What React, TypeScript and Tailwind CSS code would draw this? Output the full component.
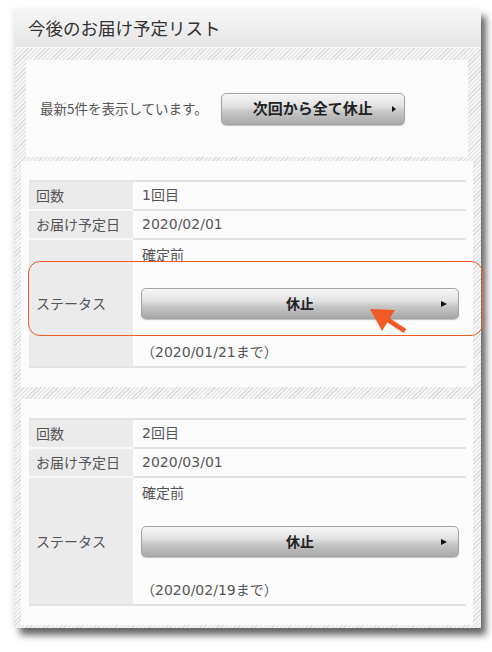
import React from 'react';

const hatch =
  'bg-[#f3f3f3] bg-[image:repeating-linear-gradient(135deg,#dcdcdc_0px,#dcdcdc_1px,#f5f5f5_1px,#f5f5f5_3px)]';

const btn =
  'relative flex items-center justify-center rounded-[5px] border border-[#a3a3a3] bg-[image:linear-gradient(to_bottom,#f6f6f6_0%,#e2e2e2_40%,#c6c6c6_60%,#a9a9a9_100%)] shadow-[0_1px_1px_rgba(0,0,0,0.25)] font-bold text-[#222]';

const valueFont = "font-['DejaVu_Sans','Noto_Sans_CJK_JP',sans-serif]";

function Triangle({ className }: { className: string }) {
  return (
    <span
      className={`absolute top-1/2 -translate-y-1/2 h-0 w-0 border-y-transparent border-l-[#111] ${className}`}
    />
  );
}

type Delivery = {
  count: string;
  date: string;
  deadline: string;
};

const deliveries: Delivery[] = [
  { count: '1回目', date: '2020/02/01', deadline: '（2020/01/21まで）' },
  { count: '2回目', date: '2020/03/01', deadline: '（2020/02/19まで）' },
];

function DeliveryCard({ item, className }: { item: Delivery; className: string }) {
  return (
    <div className={`bg-[#fcfcfc] ml-[6px] mr-[8px] pl-[8px] pr-[7px] py-[19px] ${className}`}>
      <div className="border-t-2 border-b-2 border-[#e3e3e3] text-[14px] text-[#555]">
        {/* 回数 */}
        <div className="flex">
          <div className="w-[104px] shrink-0 bg-[#ebebeb] border-b-2 border-[#f8f8f8] pl-[7px] h-[29px] flex items-center">
            回数
          </div>
          <div className={`flex-1 border-b-2 border-[#e3e3e3] pl-[9px] h-[29px] flex items-center ${valueFont}`}>
            {item.count}
          </div>
        </div>
        {/* お届け予定日 */}
        <div className="flex">
          <div className="w-[104px] shrink-0 bg-[#ebebeb] border-b-2 border-[#f8f8f8] pl-[7px] h-[29px] flex items-center">
            お届け予定日
          </div>
          <div className={`flex-1 border-b-2 border-[#e3e3e3] pl-[9px] h-[29px] flex items-center ${valueFont}`}>
            {item.date}
          </div>
        </div>
        {/* ステータス */}
        <div className="flex">
          <div className="w-[104px] shrink-0 bg-[#ebebeb] pl-[7px] flex items-center">
            ステータス
          </div>
          <div className="flex-1 pl-[8px] pr-[7px] pt-[4px] pb-[4px]">
            <div className="h-[20px] leading-[20px] pl-[1px]">確定前</div>
            <button className={`${btn} mt-[24px] w-full h-[31px] text-[14px]`}>
              休止
              <Triangle className="right-[11px] border-y-[3.5px] border-l-[6px]" />
            </button>
            <div className={`mt-[23px] h-[20px] leading-[20px] ${valueFont}`}>{item.deadline}</div>
          </div>
        </div>
      </div>
    </div>
  );
}

export default function App() {
  return (
    <div className="relative w-[492px] h-[652px] bg-white overflow-hidden font-['Noto_Sans_CJK_JP',sans-serif]">
      <div className="ml-[15px] mt-[9px] w-[466px] shadow-[5px_7px_7px_rgba(0,0,0,0.6),-3px_0_6px_rgba(0,0,0,0.06)]">
        {/* Header */}
        <div className="h-[39px] flex items-center pl-[13px] bg-[image:linear-gradient(to_bottom,#f7f7f7,#e5e5e5)] border-b border-[#fafafa] text-[17.5px] text-[#333]">
          今後のお届け予定リスト
        </div>

        <div className={`${hatch} pt-[12px] pb-[3px]`}>
          {/* Summary */}
          <div className="ml-[11px] mr-[13px] h-[97px] bg-[#fbfbfb] flex items-center pl-[14px] gap-[13px]">
            <span className="text-[13.5px] text-[#555]">最新5件を表示しています。</span>
            <button className={`${btn} w-[184px] h-[32px] text-[15px]`}>
              次回から全て休止
              <Triangle className="right-[8px] border-y-[3px] border-l-[4px]" />
            </button>
          </div>

          <DeliveryCard item={deliveries[0]} className="mt-[4px]" />
          <DeliveryCard item={deliveries[1]} className="mt-[12px]" />
        </div>
      </div>

      {/* annotation */}
      <div className="absolute left-[28px] top-[261px] w-[455px] h-[75px] rounded-[12px] border-[1.5px] border-[#f15a24]" />
      <svg className="absolute left-[365px] top-[304px]" width="45" height="32" viewBox="0 0 45 32">
        <polygon points="5,5 30,6 17,27" fill="#f15a24" />
        <line x1="20" y1="14" x2="40" y2="27" stroke="#f15a24" strokeWidth="5" />
      </svg>
    </div>
  );
}
